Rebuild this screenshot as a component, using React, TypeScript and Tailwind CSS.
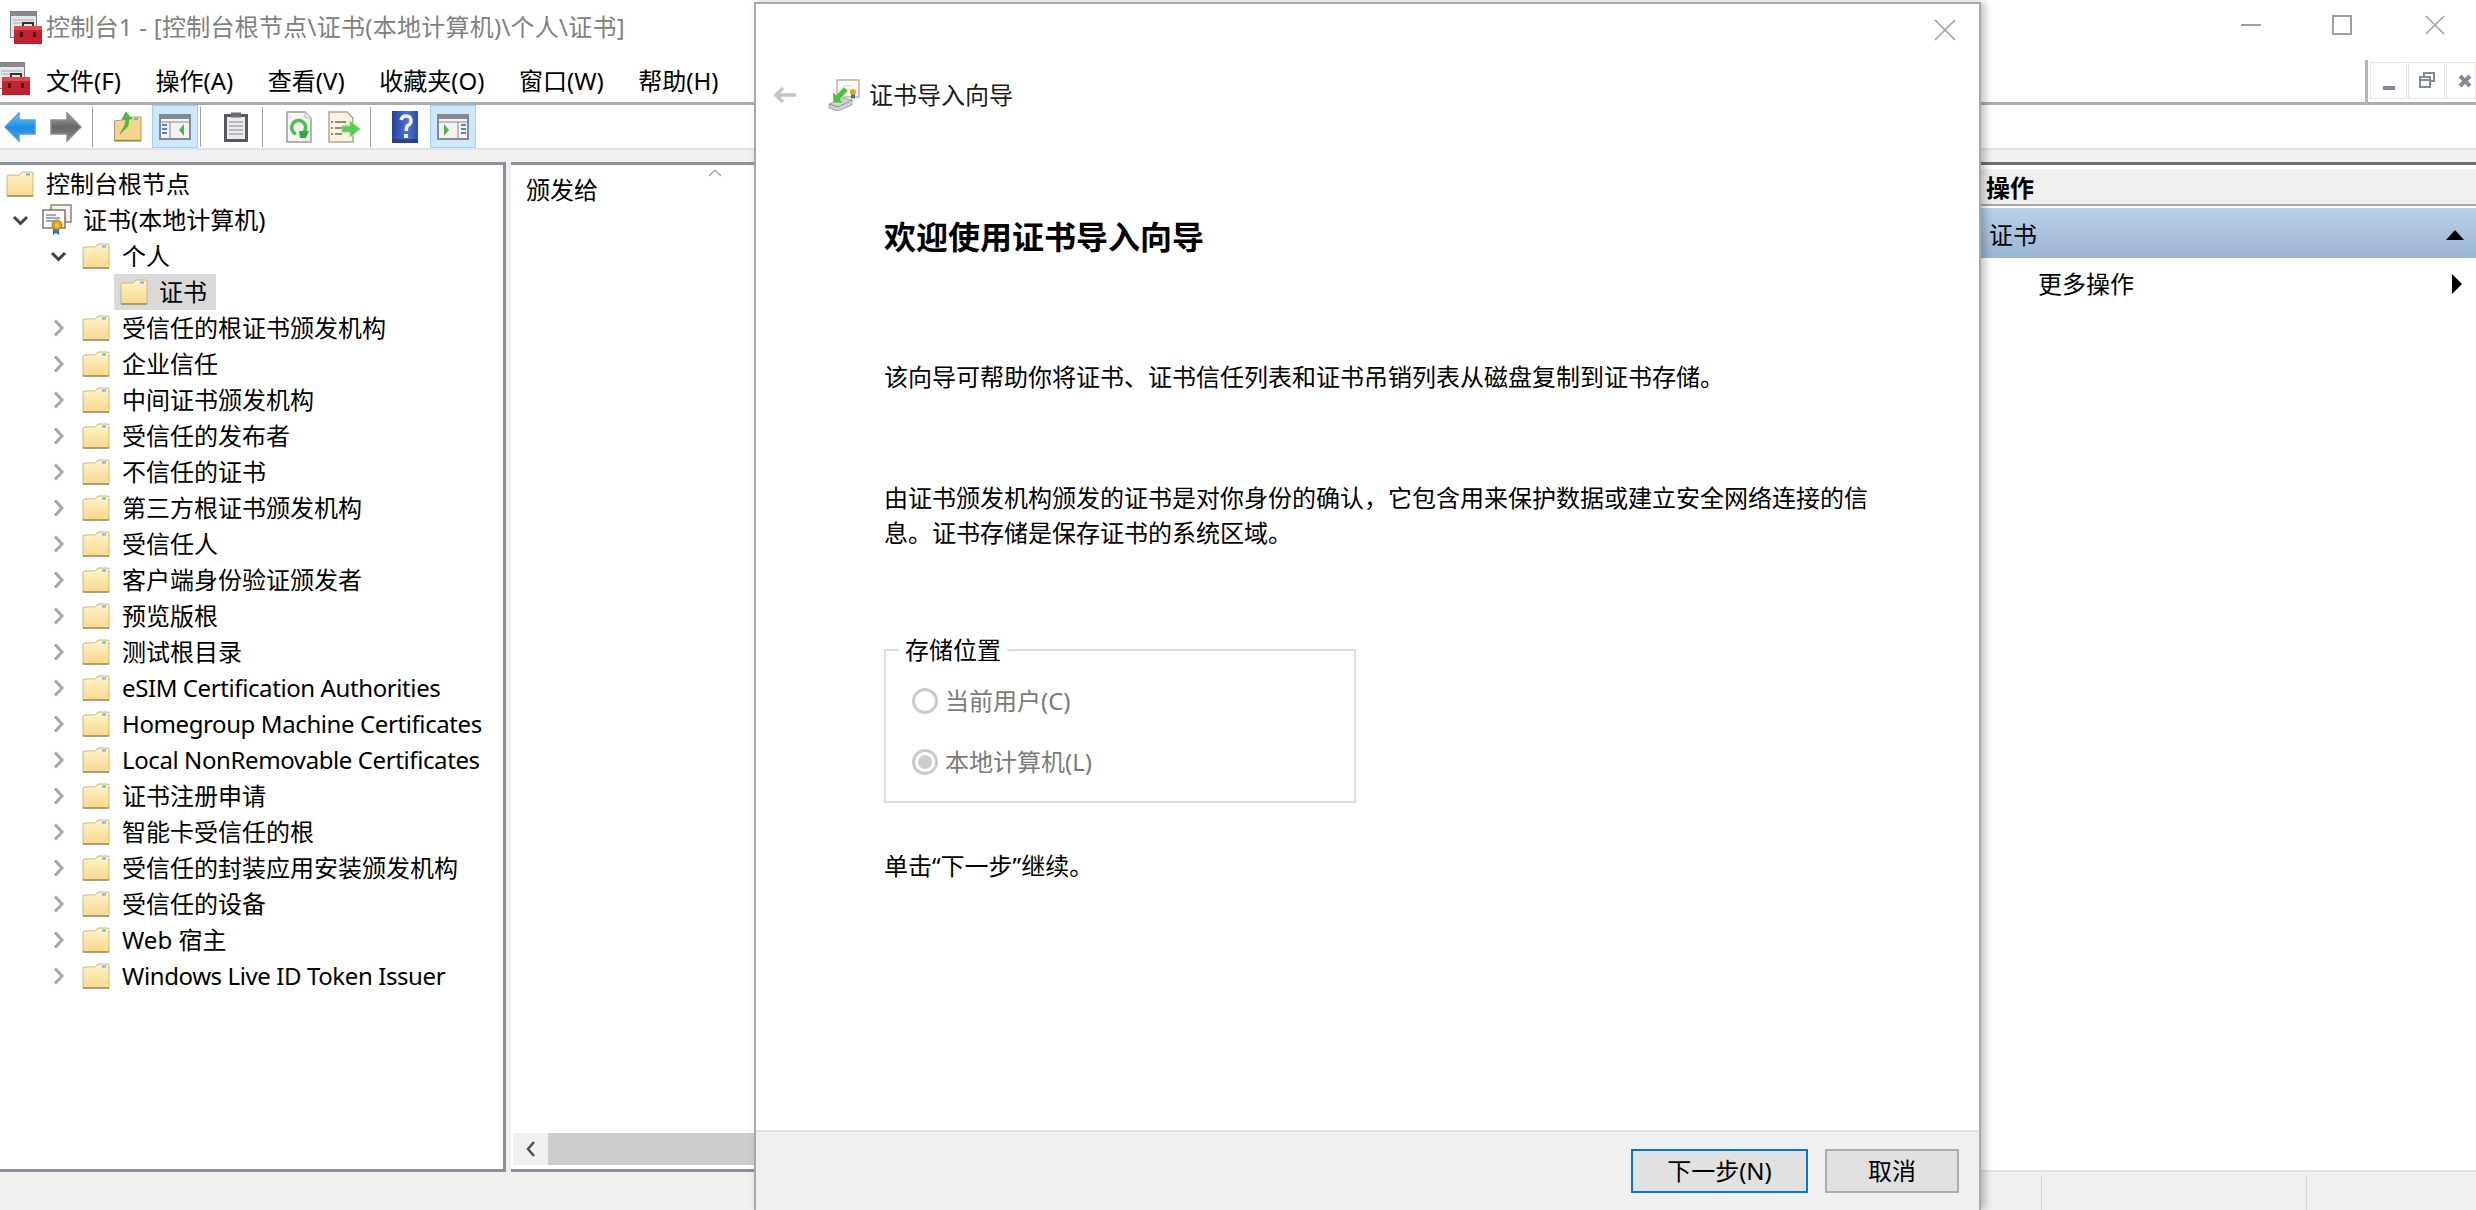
import React from "react";

const treeRows = [
  "受信任的根证书颁发机构",
  "企业信任",
  "中间证书颁发机构",
  "受信任的发布者",
  "不信任的证书",
  "第三方根证书颁发机构",
  "受信任人",
  "客户端身份验证颁发者",
  "预览版根",
  "测试根目录",
  "eSIM Certification Authorities",
  "Homegroup Machine Certificates",
  "Local NonRemovable Certificates",
  "证书注册申请",
  "智能卡受信任的根",
  "受信任的封装应用安装颁发机构",
  "受信任的设备",
  "Web 宿主",
  "Windows Live ID Token Issuer",
];

const menuItems = ["文件(F)", "操作(A)", "查看(V)", "收藏夹(O)", "窗口(W)", "帮助(H)"];

const Folder = () => (
  <svg width="28" height="26" viewBox="0 0 28 26" className="shrink-0">
    <defs>
      <linearGradient id="folderFill" x1="0" y1="0" x2="0" y2="1">
        <stop offset="0" stopColor="#fff4cc" />
        <stop offset="1" stopColor="#f8d88e" />
      </linearGradient>
    </defs>
    <path d="M1 6 Q1 4 3 4 L13 4 L16 1 L26 1 L27 2 V25 H1 Z" fill="url(#folderFill)" stroke="#cdb478" />
    <path d="M1 25 H27" stroke="#a88f58" strokeWidth="1.5" />
    <rect x="20" y="2.5" width="4" height="2" fill="#63b4f0" />
  </svg>
);

const CertIcon = () => (
  <svg width="30" height="32" viewBox="0 0 30 32" className="shrink-0">
    <rect x="9" y="1" width="20" height="17" fill="#f4f1e8" stroke="#8f8570" strokeWidth="1.5" />
    <rect x="1" y="6" width="22" height="18" fill="#fbfaf6" stroke="#7d7565" strokeWidth="1.5" />
    <path d="M4 11 H14 M4 14 H18 M4 17 H12" stroke="#7b93bd" strokeWidth="1.5" />
    <path d="M11 24 V31 L14 29 L17 31 V24 Z" fill="#2f6fd0" />
    <circle cx="15" cy="21" r="5" fill="#dda11f" stroke="#b57c10" />
    <circle cx="15" cy="21" r="2" fill="#f3cd62" />
  </svg>
);

const ConsoleIcon = () => (
  <svg width="32" height="33" viewBox="0 0 32 33" className="shrink-0">
    <rect x="0.5" y="0.5" width="26" height="26" fill="#e6e7ea" stroke="#7c8088" />
    <rect x="1" y="1" width="25" height="4" fill="#858a93" />
    <path d="M3 9 H24 M3 12 H24" stroke="#a6aab2" />
    <path d="M13 15 V12 H23 V15" fill="none" stroke="#3a3033" strokeWidth="2" />
    <rect x="4" y="15" width="28" height="18" fill="#c3212b" />
    <rect x="4" y="15" width="28" height="4" fill="#dc4a4e" />
    <rect x="10" y="21" width="3" height="5" fill="#3c1416" />
    <rect x="23" y="21" width="3" height="5" fill="#3c1416" />
  </svg>
);

const NavArrow = ({ dir }: { dir: "back" | "forward" }) => (
  <svg width="32" height="30" viewBox="0 0 32 30" className="shrink-0">
    <defs>
      <linearGradient id="navBlue" x1="0" y1="0" x2="0" y2="1">
        <stop offset="0" stopColor="#7cc6f5" />
        <stop offset="0.5" stopColor="#1c8fe6" />
        <stop offset="1" stopColor="#3aa0ec" />
      </linearGradient>
      <linearGradient id="navGray" x1="0" y1="0" x2="0" y2="1">
        <stop offset="0" stopColor="#a8a8a8" />
        <stop offset="0.5" stopColor="#666666" />
        <stop offset="1" stopColor="#8f8f8f" />
      </linearGradient>
    </defs>
    {dir === "back" ? (
      <path d="M1 15 L15 1 V8 H31 V22 H15 V29 Z" fill="url(#navBlue)" stroke="#5a9bd8" strokeWidth="1.5" />
    ) : (
      <path d="M31 15 L17 1 V8 H1 V22 H17 V29 Z" fill="url(#navGray)" stroke="#8c8c8c" strokeWidth="1.5" />
    )}
  </svg>
);

const FolderUp = () => (
  <svg width="28" height="30" viewBox="0 0 28 30" className="shrink-0">
    <path d="M0.5 9 L14 7 L18 5 H27 V29 H0.5 Z" fill="#f3d68e" stroke="#b09a63" />
    <path d="M1 28.5 H27" stroke="#9c8653" strokeWidth="1.5" />
    <rect x="20" y="6" width="4" height="2" fill="#63b4f0" />
    <path d="M12 0 L18 7 H15 L14 14 L6 22 L11 13 L12 7 H8 Z" fill="#48c03c" stroke="#2f9a2a" strokeWidth="0.5" />
  </svg>
);

const PaneToggle = ({ side }: { side: "left" | "right" }) => (
  <svg width="32" height="26" viewBox="0 0 32 26" className="shrink-0">
    <rect x="1" y="1" width="30" height="24" fill="#f3f3f3" stroke="#85898f" strokeWidth="2" />
    <rect x="1" y="1" width="30" height="4" fill="#85898f" />
    <path d="M1 8 H31" stroke="#85898f" />
    {side === "left" ? (
      <>
        <path d="M11 8 V25" stroke="#85898f" />
        <path d="M3 11 H8 M3 15 H8 M3 19 H8" stroke="#4f86c6" strokeWidth="2" />
        <path d="M25 10 L20 16 L25 22 Z" fill="#4db848" />
      </>
    ) : (
      <>
        <path d="M21 8 V25" stroke="#85898f" />
        <path d="M24 11 H29 M24 15 H29 M24 19 H29" stroke="#4f86c6" strokeWidth="2" />
        <path d="M7 10 L12 16 L7 22 Z" fill="#4db848" />
      </>
    )}
  </svg>
);

const Clipboard = () => (
  <svg width="24" height="30" viewBox="0 0 24 30" className="shrink-0">
    <rect x="1.5" y="3.5" width="21" height="25" fill="#ececec" stroke="#55585c" strokeWidth="3" />
    <rect x="7" y="0.5" width="10" height="5" fill="#6a6d70" />
    <path d="M5 10 H19 M5 14 H19 M5 18 H19 M5 22 H19" stroke="#a5a7aa" strokeWidth="1.5" />
  </svg>
);

const RefreshDoc = () => (
  <svg width="26" height="32" viewBox="0 0 26 32" className="shrink-0">
    <path d="M1 1 H19 L25 7 V31 H1 Z" fill="#f5f5f5" stroke="#9c9c9c" strokeWidth="1.5" />
    <path d="M19 1 V7 H25" fill="#e2e2e2" stroke="#bdbdbd" />
    <path d="M17 22 A7 7 0 1 0 10 23" fill="none" stroke="#4fbf4a" strokeWidth="3.5" />
    <path d="M13 20 L23 20 L20 27 H14 Z" fill="#3aa83a" />
  </svg>
);

const ExportDoc = () => (
  <svg width="32" height="32" viewBox="0 0 32 32" className="shrink-0">
    <path d="M1 1 H19 L25 7 V31 H1 Z" fill="#f8f3da" stroke="#a8a8a0" strokeWidth="1.5" />
    <path d="M7 11 H18 M7 17 H14 M7 23 H14 M3 11 H5 M3 17 H5 M3 23 H5" stroke="#6b6b6b" strokeWidth="1.5" />
    <path d="M14 15 H22 V10 L32 18 L22 26 V21 H14 Z" fill="#62c756" stroke="#8edb85" />
  </svg>
);

const HelpIcon = () => (
  <svg width="26" height="32" viewBox="0 0 26 32" className="shrink-0">
    <defs>
      <linearGradient id="helpFill" x1="0" y1="0" x2="1" y2="0">
        <stop offset="0" stopColor="#2440a0" />
        <stop offset="0.6" stopColor="#4f72d0" />
        <stop offset="1" stopColor="#2b4ba8" />
      </linearGradient>
    </defs>
    <rect width="26" height="32" fill="url(#helpFill)" />
    <rect y="28" width="26" height="4" fill="#2a3a80" opacity="0.8" />
    <path d="M9 9 Q10 5 14 5 Q19 5 19 10 Q19 13 15 15 L14 20" fill="none" stroke="#eef0fa" strokeWidth="3.5" />
    <rect x="12" y="23" width="4" height="4" fill="#eef0fa" />
  </svg>
);

const WizardIcon = () => (
  <svg width="32" height="32" viewBox="0 0 32 32" className="shrink-0">
    <rect x="9" y="1" width="22" height="17" fill="#fbfaf5" stroke="#cfc6b2" strokeWidth="2" />
    <path d="M15 7 H24 M15 10 H22" stroke="#d8d8d8" />
    <path d="M23 15 V20 L25 19 L27 20 V15 Z" fill="#2f6fd0" />
    <circle cx="25" cy="13" r="3" fill="#e3a21d" />
    <path d="M1 25 L14 19 L24 21 L24 26 L10 32 L1 29 Z" fill="#d0d2d4" stroke="#a4a7aa" />
    <path d="M1 25 L10 28 L24 21" fill="none" stroke="#8f9295" />
    <path d="M16 8 L8 16 L5 13 L5 24 L15 24 L12 20 L20 12 Z" fill="#4fc040" stroke="#e9f7e6" strokeWidth="0.5" />
  </svg>
);

const ChevronDown = () => (
  <svg width="17" height="11" viewBox="0 0 17 11" className="shrink-0">
    <path d="M2 2 L8.5 8.5 L15 2" fill="none" stroke="#404040" strokeWidth="3" />
  </svg>
);

const ChevronRight = () => (
  <svg width="11" height="18" viewBox="0 0 11 18" className="shrink-0">
    <path d="M2 1.5 L9 9 L2 16.5" fill="none" stroke="#a6a6a6" strokeWidth="3" />
  </svg>
);

const Separator = ({ className }: { className: string }) => (
  <div className={`w-[1px] h-[40px] bg-[#a0a0a0] ${className}`} />
);

const ToggleButton = ({ side, className }: { side: "left" | "right"; className: string }) => (
  <div className={`w-[46px] h-[43px] flex items-center justify-center border border-[#99d1ff] bg-[#cce8ff] ${className}`}>
    <PaneToggle side={side} />
  </div>
);

const WindowLine = () => <div className="w-[20px] h-[2px] bg-[#a0a0a0]" />;

function Wizard() {
  return (
    <div className="absolute left-[754px] top-[2px] w-[1227px] h-[1208px] bg-white border-x-2 border-t-2 border-[#a9a9a9] flex flex-col shadow-[4px_0_8px_rgba(0,0,0,0.25)]">
      <div className="flex items-center h-[36px] mt-[8px] justify-end pr-[23px]">
        <svg width="22" height="22" viewBox="0 0 22 22">
          <path d="M1 1 L21 21 M21 1 L1 21" stroke="#a0a0a0" strokeWidth="1.6" />
        </svg>
      </div>
      <div className="flex items-center h-[36px] mt-[29px]">
        <svg width="24" height="18" viewBox="0 0 24 18" className="ml-[17px]">
          <path d="M10 2 L3 9 L10 16 M3 9 H23" fill="none" stroke="#c4c4c4" strokeWidth="3.5" />
        </svg>
        <div className="ml-[31px]">
          <WizardIcon />
        </div>
        <span className="ml-[9px] text-[24px] leading-[36px] text-[#1a1a1a]">证书导入向导</span>
      </div>
      <div className="flex-1 pl-[128px] flex flex-col text-[24px] leading-[35px] text-black">
        <h1 className="mt-[100px] text-[32px] leading-[48px] font-bold">欢迎使用证书导入向导</h1>
        <p className="mt-[98px]">该向导可帮助你将证书、证书信任列表和证书吊销列表从磁盘复制到证书存储。</p>
        <p className="mt-[86px] w-[990px]">
          由证书颁发机构颁发的证书是对你身份的确认，它包含用来保护数据或建立安全网络连接的信息。证书存储是保存证书的系统区域。
        </p>
        <div className="mt-[99px] w-[472px] h-[154px] border-2 border-[#dcdcdc]">
          <div className="ml-[13px] -mt-[19px] w-fit bg-white px-[6px] text-black">存储位置</div>
          <div className="mt-[16px] ml-[26px] flex items-center text-[#7a7a7a]">
            <span className="w-[26px] h-[26px] rounded-full border-[3px] border-[#cbcbcb]" />
            <span className="ml-[7px]">当前用户(C)</span>
          </div>
          <div className="mt-[26px] ml-[26px] flex items-center text-[#7a7a7a]">
            <span className="w-[26px] h-[26px] rounded-full border-[3px] border-[#cbcbcb] flex items-center justify-center">
              <span className="w-[14px] h-[14px] rounded-full bg-[#cccccc]" />
            </span>
            <span className="ml-[7px]">本地计算机(L)</span>
          </div>
        </div>
        <p className="mt-[45px]">单击“下一步”继续。</p>
      </div>
      <div className="h-[80px] shrink-0 bg-[#f0f0f0] border-t-2 border-[#dfdfdf] flex items-start justify-end pt-[17px] pr-[20px] text-[24px] text-black">
        <button className="w-[177px] h-[44px] bg-[#e1e1e1] border-2 border-[#0078d7] leading-[40px]">下一步(N)</button>
        <button className="ml-[17px] w-[134px] h-[44px] bg-[#e1e1e1] border-2 border-[#adadad] leading-[40px]">取消</button>
      </div>
    </div>
  );
}

export default function App() {
  return (
    <div className="relative w-[2476px] h-[1210px] overflow-hidden bg-white text-black flex flex-col [font-family:'Noto_Sans','Noto_Sans_CJK_SC',sans-serif]">
      <div className="h-[50px] shrink-0 flex items-center relative">
        <div className="ml-[10px] mt-[4px]">
          <ConsoleIcon />
        </div>
        <span className="ml-[4px] mt-[4px] text-[24px] leading-[36px] tracking-[0.26px] text-[#808080]">
          控制台1 - [控制台根节点\证书(本地计算机)\个人\证书]
        </span>
        <div className="ml-auto flex items-center">
          <WindowLine />
          <div className="ml-[71px] w-[20px] h-[20px] border-2 border-[#a0a0a0]" />
          <svg width="20" height="20" viewBox="0 0 20 20" className="ml-[73px] mr-[31px]">
            <path d="M1 1 L19 19 M19 1 L1 19" stroke="#a0a0a0" strokeWidth="1.6" />
          </svg>
        </div>
      </div>

      <div className="h-[55px] shrink-0 flex items-end relative">
        <div className="flex-1 h-full flex items-center border-b-[3px] border-[#adadad] relative">
          <div className="-ml-[2px] mt-[4px]">
            <ConsoleIcon />
          </div>
          <div className="flex items-center gap-[34.6px] ml-[16px] text-[24px] leading-[36px] mt-[10px]">
            {menuItems.map((item) => (
              <span key={item}>{item}</span>
            ))}
          </div>
        </div>
        <div className="w-[3px] h-[45px] bg-[#b4b4b4]" />
        <div className="w-[108px] h-full flex flex-col justify-end border-b-[3px] border-[#adadad] pl-[2px]">
          <div className="flex gap-[1px] mb-[3px]">
            <div className="w-[37px] h-[37px] border border-[#e4e4e4] flex items-end justify-center pb-[8px]">
              <div className="w-[12px] h-[4px] bg-[#7f8b9c]" />
            </div>
            <div className="w-[37px] h-[37px] border border-[#e4e4e4] flex items-center justify-center">
              <svg width="16" height="17" viewBox="0 0 16 17">
                <path d="M5 4 V1 H15 V9 H11 M1 5 H11 V15 H1 Z M1 8 H11" fill="none" stroke="#7f8b9c" strokeWidth="2" />
              </svg>
            </div>
            <div className="w-[30px] h-[37px] border border-[#e4e4e4] flex items-center pl-[11px]">
              <svg width="14" height="14" viewBox="0 0 14 14">
                <path d="M2 2 L12 12 M12 2 L2 12" stroke="#7f8b9c" strokeWidth="4" />
              </svg>
            </div>
          </div>
        </div>
      </div>

      <div className="h-[45px] shrink-0 flex items-center border-b-2 border-[#e3e3e3]">
        <div className="ml-[4px]">
          <NavArrow dir="back" />
        </div>
        <div className="ml-[14px]">
          <NavArrow dir="forward" />
        </div>
        <Separator className="ml-[10px]" />
        <div className="ml-[21px]">
          <FolderUp />
        </div>
        <ToggleButton side="left" className="ml-[10px]" />
        <Separator className="ml-[2px]" />
        <div className="ml-[23px]">
          <Clipboard />
        </div>
        <Separator className="ml-[14px]" />
        <div className="ml-[23px]">
          <RefreshDoc />
        </div>
        <div className="ml-[16px]">
          <ExportDoc />
        </div>
        <Separator className="ml-[10px]" />
        <div className="ml-[21px]">
          <HelpIcon />
        </div>
        <ToggleButton side="right" className="ml-[12px]" />
      </div>

      <div className="h-[12px] shrink-0 bg-[#f0f0f0]" />

      <div className="h-[1010px] shrink-0 flex bg-[#f0f0f0]">
        <div className="w-[506px] border-t-[3px] border-r-[3px] border-b-[3px] border-[#8a8f99] bg-white pt-[1px] text-[24px] leading-[36px] overflow-hidden">
          <div className="h-[36px] flex items-center pl-[6px]">
            <Folder />
            <span className="ml-[12px]">控制台根节点</span>
          </div>
          <div className="h-[36px] flex items-center pl-[12px]">
            <ChevronDown />
            <div className="ml-[13px]">
              <CertIcon />
            </div>
            <span className="ml-[11px]">证书(本地计算机)</span>
          </div>
          <div className="h-[36px] flex items-center pl-[50px]">
            <ChevronDown />
            <div className="ml-[15px]">
              <Folder />
            </div>
            <span className="ml-[12px]">个人</span>
          </div>
          <div className="h-[36px] flex items-center pl-[114px]">
            <div className="h-[36px] w-[102px] bg-[#d9d9d9] flex items-center pl-[6px]">
              <Folder />
              <span className="ml-[11px]">证书</span>
            </div>
          </div>
          {treeRows.map((row) => (
            <div key={row} className="h-[36px] flex items-center pl-[53px]">
              <ChevronRight />
              <div className="ml-[18px]">
                <Folder />
              </div>
              <span className={/^[\x00-\x7f]+$/.test(row) ? "ml-[12px] whitespace-nowrap tracking-[-0.4px]" : "ml-[12px] whitespace-nowrap"}>
                {row}
              </span>
            </div>
          ))}
        </div>

        <div className="ml-[5px] w-[1469px] relative border-t-[3px] border-b-[3px] border-[#8a8f99] bg-white flex flex-col">
          <div className="flex-1 pl-[15px] pt-[7px] text-[24px] leading-[36px]">
            <span>颁发给</span>
            <svg width="14" height="8" viewBox="0 0 14 8" className="absolute left-[197px] top-[4px]">
              <path d="M1 7 L7 1 L13 7" fill="none" stroke="#9a9a9a" strokeWidth="1.2" />
            </svg>
          </div>
          <div className="h-[32px] mx-[2px] mb-[4px] flex bg-[#f0f0f0]">
            <div className="w-[35px] flex items-center justify-center">
              <svg width="10" height="16" viewBox="0 0 10 16">
                <path d="M8 1 L2 8 L8 15" fill="none" stroke="#505050" strokeWidth="2.5" />
              </svg>
            </div>
            <div className="w-[300px] bg-[#cdcdcd]" />
          </div>
        </div>

        <div className="flex-1 flex flex-col bg-white border-t-[3px] border-[#6f6f6f]">
          <div className="mt-[4px] h-[37px] pl-[6px] bg-[#f0f0f0] font-bold text-[24px] leading-[37px] border-b-[2px] border-[#a5a5a5]">
            操作
          </div>
          <div className="mt-[2px] h-[50px] pl-[9px] pr-[12px] pt-[4px] flex items-center justify-between bg-gradient-to-b from-[#bad2e9] to-[#9ab5d2] text-[24px]">
            <span>证书</span>
            <svg width="18" height="10" viewBox="0 0 18 10">
              <path d="M9 0 L18 10 H0 Z" fill="#000" />
            </svg>
          </div>
          <div className="h-[50px] pl-[58px] pr-[14px] pt-[2px] flex items-center justify-between text-[24px]">
            <span>更多操作</span>
            <svg width="10" height="20" viewBox="0 0 10 20">
              <path d="M0 0 L10 10 L0 20 Z" fill="#000" />
            </svg>
          </div>
          <div className="flex-1" />
          <div className="h-[4px] border-b-2 border-[#e0e0e0]" />
        </div>
      </div>

      <div className="flex-1 bg-[#f0f0f0] flex pt-[3px] pl-[2041px]">
        <div className="w-[266px] border-x border-[#d6d6d6]" />
      </div>

      <Wizard />
    </div>
  );
}
